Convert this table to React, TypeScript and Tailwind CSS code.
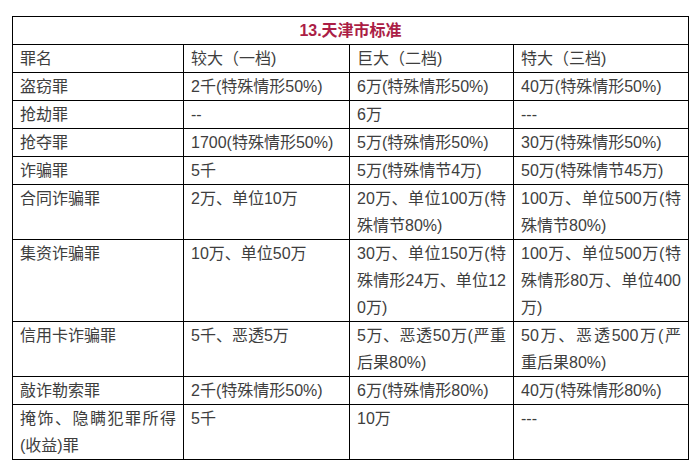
const rows: string[][] = [
  ["盗窃罪", "2千(特殊情形50%)", "6万(特殊情形50%)", "40万(特殊情形50%)"],
  ["抢劫罪", "--", "6万", "---"],
  ["抢夺罪", "1700(特殊情形50%)", "5万(特殊情形50%)", "30万(特殊情形50%)"],
  ["诈骗罪", "5千", "5万(特殊情节4万)", "50万(特殊情节45万)"],
  ["合同诈骗罪", "2万、单位10万", "20万、单位100万(特殊情节80%)", "100万、单位500万(特殊情节80%)"],
  ["集资诈骗罪", "10万、单位50万", "30万、单位150万(特殊情形24万、单位120万)", "100万、单位500万(特殊情形80万、单位400万)"],
  ["信用卡诈骗罪", "5千、恶透5万", "5万、恶透50万(严重后果80%)", "50万、恶透500万(严重后果80%)"],
  ["敲诈勒索罪", "2千(特殊情形50%)", "6万(特殊情形80%)", "40万(特殊情形80%)"],
  ["掩饰、隐瞒犯罪所得(收益)罪", "5千", "10万", "---"],
]

const cell = "border border-black px-[7px] align-top text-justify break-all"

export default function App() {
  return (
    <div className="min-h-[473px] w-[700px] bg-white pl-[12px] pt-[16px] font-['Liberation_Sans','Noto_Sans_CJK_SC',sans-serif] text-[16px] leading-[27px] text-[#3e3e3e]">
      <table className="w-[676px] table-fixed border-collapse">
        <colgroup>
          <col className="w-[171px]" />
          <col className="w-[166px]" />
          <col className="w-[164px]" />
          <col className="w-[175px]" />
        </colgroup>
        <tbody>
          <tr>
            <td colSpan={4} className="border border-black text-center font-bold text-[#ab1e46]">
              13.天津市标准
            </td>
          </tr>
          <tr>
            <td className={cell}>罪名</td>
            <td className={cell}>较大（一档)</td>
            <td className={cell}>巨大（二档)</td>
            <td className={cell}>特大（三档)</td>
          </tr>
          {rows.map((r) => (
            <tr key={r[0]}>
              {r.map((c, i) => (
                <td key={i} className={cell}>
                  {c}
                </td>
              ))}
            </tr>
          ))}
        </tbody>
      </table>
    </div>
  )
}
